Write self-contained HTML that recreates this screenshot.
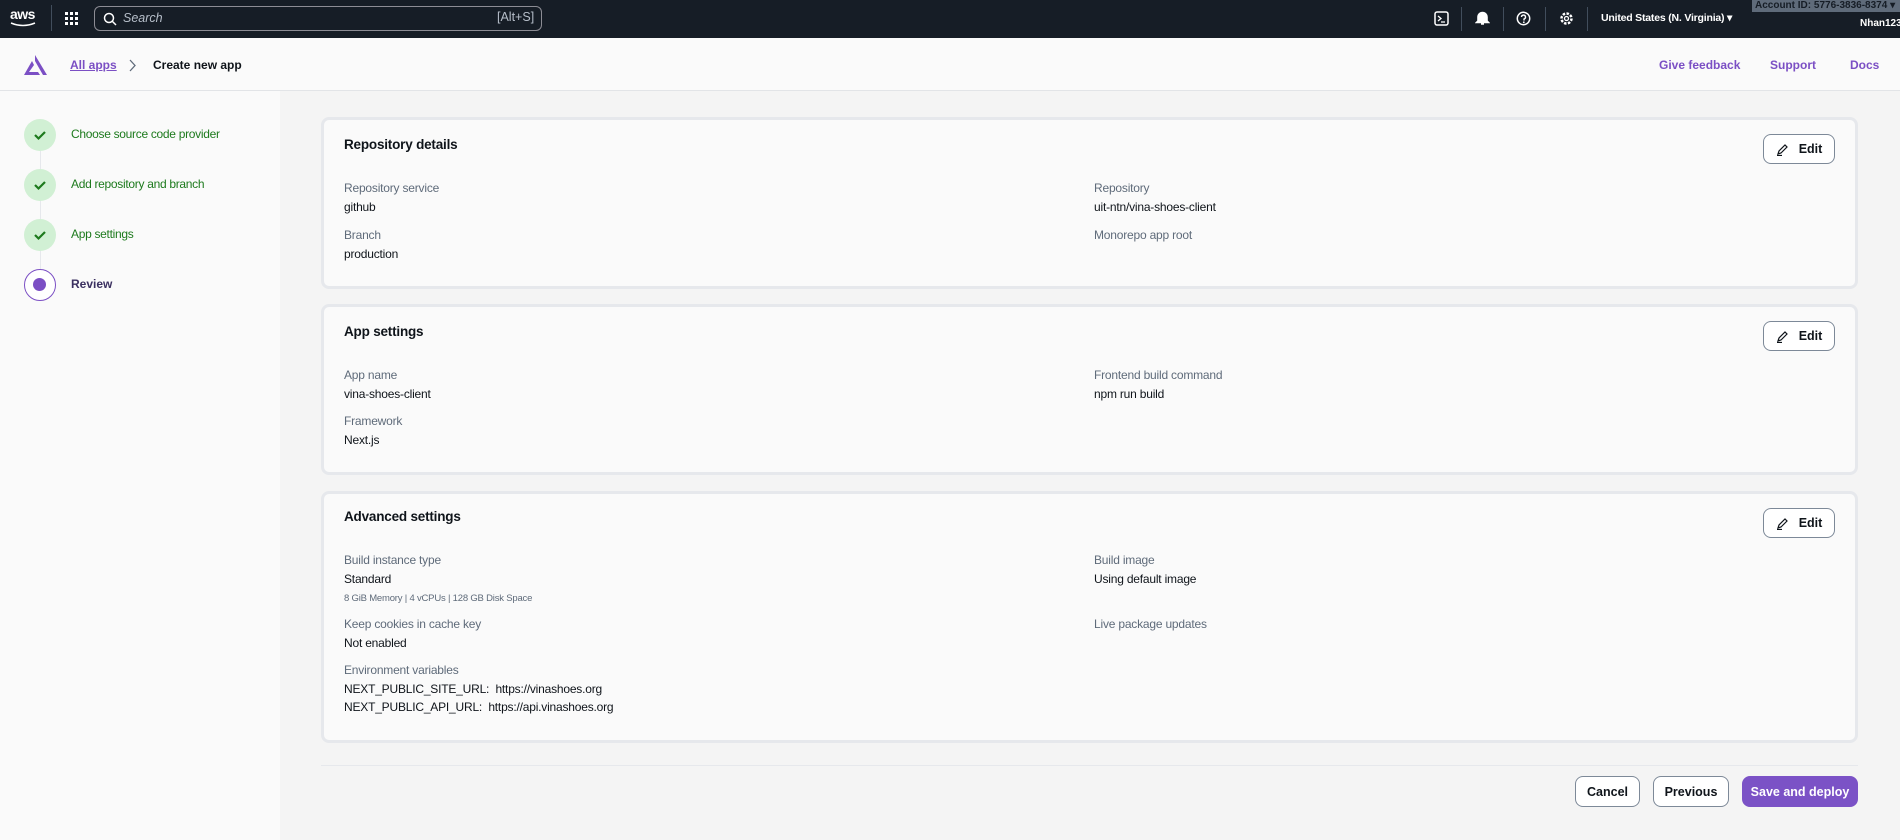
<!DOCTYPE html>
<html><head><meta charset="utf-8"><style>
*{box-sizing:border-box;margin:0;padding:0}
body{width:1900px;height:840px;overflow:hidden;font-family:"Liberation Sans",sans-serif;font-size:12px;color:#0f141a;background:#f4f4f4;position:relative}
.abs{position:absolute}
.top{left:0;top:0;width:1900px;height:38px;background:#161d26}
.hdr{left:0;top:38px;width:1900px;height:53px;background:#fafafa;border-bottom:1px solid #e2e4e7}
.side{left:0;top:91px;width:280px;height:749px;background:#fafafa}
.circ{width:32px;height:32px;border-radius:50%;background:#d1f0d4;left:24px}
.circ svg{position:absolute;left:8px;top:8px}
.step{left:71px;color:#1d7a1d;font-size:12px;letter-spacing:-0.3px}
.card{left:321px;width:1537px;background:#fafafa;border:3px solid #e6e8ec;border-radius:8px}
.ttl{font-weight:bold;font-size:13.5px;left:20px;letter-spacing:-0.2px}
.lb{color:#5f6b7a;font-size:12px;letter-spacing:-0.2px}
.vl{font-size:12px;letter-spacing:-0.2px}
.edit{width:72px;height:30px;border:1px solid #7d8998;border-radius:8px;background:#fff;font-weight:bold;font-size:12.5px;display:flex;align-items:center;justify-content:center;gap:10px}
.btn{height:31px;border:1px solid #7d8998;border-radius:8px;background:#fff;font-weight:bold;font-size:12.5px;display:flex;align-items:center;justify-content:center}
.purp{color:#7b4fc4;font-weight:bold;font-size:12px}
.sep{width:1px;height:24px;background:#414d5c;top:7px}
</style></head><body>
<div class="abs top">
 <div class="abs" style="left:10px;top:6px;color:#fff;font-size:14px;font-weight:bold;letter-spacing:-0.5px">aws</div>
 <svg class="abs" style="left:10px;top:22px" width="28" height="6"><path d="M1 1 Q13 6 25 1" stroke="#fff" stroke-width="1.5" fill="none"/></svg>
 <div class="abs" style="left:51px;top:5px;width:1px;height:26px;background:#414d5c"></div>
 <svg class="abs" style="left:65px;top:12px" width="14" height="14" fill="#fff"><rect x="0" y="0" width="3" height="3"/><rect x="5" y="0" width="3" height="3"/><rect x="10" y="0" width="3" height="3"/><rect x="0" y="5" width="3" height="3"/><rect x="5" y="5" width="3" height="3"/><rect x="10" y="5" width="3" height="3"/><rect x="0" y="10" width="3" height="3"/><rect x="5" y="10" width="3" height="3"/><rect x="10" y="10" width="3" height="3"/></svg>
 <div class="abs" style="left:94px;top:6px;width:448px;height:25px;border:1px solid #8c8c94;border-radius:6px"></div>
 <svg class="abs" style="left:103px;top:12px" width="14" height="14"><circle cx="6" cy="6" r="4.5" stroke="#fff" stroke-width="1.5" fill="none"/><path d="M9.5 9.5L13 13" stroke="#fff" stroke-width="1.5"/></svg>
 <div class="abs" style="left:123px;top:11px;color:#b6bec9;font-style:italic;font-size:12.5px">Search</div>
 <div class="abs" style="left:497px;top:10px;color:#b6bec9;font-size:12.5px">[Alt+S]</div>
 <svg class="abs" style="left:1434px;top:11px" width="15" height="15"><rect x="1" y="1" width="13" height="13" rx="2" stroke="#fff" stroke-width="1.5" fill="none"/><path d="M4 5l3 2.5L4 10M7 11h4" stroke="#fff" stroke-width="1.3" fill="none"/></svg>
 <div class="abs sep" style="left:1461px"></div>
 <svg class="abs" style="left:1475px;top:10px" width="15" height="16"><path d="M3 11V7a4.5 4.5 0 0 1 9 0v4l1.5 1.5h-12z M6 14h3" stroke="#fff" stroke-width="1.6" fill="#fff"/></svg>
 <div class="abs sep" style="left:1503px"></div>
 <svg class="abs" style="left:1516px;top:11px" width="15" height="15"><circle cx="7.5" cy="7.5" r="6.2" stroke="#fff" stroke-width="1.5" fill="none"/><path d="M5.5 6a2 2 0 1 1 2.5 2v1.5" stroke="#fff" stroke-width="1.4" fill="none"/><circle cx="7.8" cy="11.3" r="0.9" fill="#fff"/></svg>
 <div class="abs sep" style="left:1545px"></div>
 <svg class="abs" style="left:1559px;top:11px" width="15" height="15"><circle cx="7.5" cy="7.5" r="5" stroke="#fff" stroke-width="2.5" stroke-dasharray="2.5 1.4" fill="none"/><circle cx="7.5" cy="7.5" r="2" stroke="#fff" stroke-width="1.3" fill="none"/></svg>
 <div class="abs sep" style="left:1587px"></div>
 <div class="abs" style="left:1601px;top:12px;color:#fff;font-size:10.5px;font-weight:bold;letter-spacing:-0.2px">United States (N. Virginia) ▾</div>
 <div class="abs" style="left:1752px;top:0;width:148px;height:12px;background:#5f6b7a;color:#161d26;font-size:10px;font-weight:bold;line-height:12px;padding-left:3px;white-space:nowrap">Account ID: 5776-3836-8374 ▾</div>
 <div class="abs" style="left:1860px;top:18px;color:#fff;font-size:10px;font-weight:bold">Nhan123</div>
</div>
<div class="abs hdr">
 <svg class="abs" style="left:23px;top:17px" width="25" height="21"><path d="M12 0L24 20h-4L12 6z M9 6l2 4-5 7h9l2 3H1z" fill="#7b4fc4"/></svg>
 <div class="abs" style="left:70px;top:20px;color:#7b4fc4;font-weight:bold;text-decoration:underline;font-size:12px">All apps</div>
 <svg class="abs" style="left:129px;top:21px" width="8" height="13"><path d="M1 1l5 5.5L1 12" stroke="#5f6b7a" stroke-width="1.3" fill="none"/></svg>
 <div class="abs" style="left:153px;top:20px;font-weight:bold;font-size:12px">Create new app</div>
 <div class="abs purp" style="left:1659px;top:20px">Give feedback</div>
 <div class="abs purp" style="left:1770px;top:20px">Support</div>
 <div class="abs purp" style="left:1850px;top:20px">Docs</div>
</div>
<div class="abs side"></div>
<div class="abs" style="left:40px;top:151px;width:1px;height:118px;background:#e6e8ec"></div>
<div class="abs circ" style="top:119px"><svg width="16" height="16"><path d="M3 8l3.5 3.5L13 5" stroke="#1d7a1d" stroke-width="2.2" fill="none"/></svg></div>
<div class="abs step" style="top:127px">Choose source code provider</div>
<div class="abs circ" style="top:169px"><svg width="16" height="16"><path d="M3 8l3.5 3.5L13 5" stroke="#1d7a1d" stroke-width="2.2" fill="none"/></svg></div>
<div class="abs step" style="top:177px">Add repository and branch</div>
<div class="abs circ" style="top:219px"><svg width="16" height="16"><path d="M3 8l3.5 3.5L13 5" stroke="#1d7a1d" stroke-width="2.2" fill="none"/></svg></div>
<div class="abs step" style="top:227px">App settings</div>
<div class="abs" style="left:24px;top:269px;width:32px;height:32px;border-radius:50%;border:1.5px solid #7b4fc4;background:#fff"><div class="abs" style="left:8px;top:8px;width:13px;height:13px;border-radius:50%;background:#7b4fc4"></div></div>
<div class="abs" style="left:71px;top:277px;font-weight:bold;color:#3b3060;font-size:12px">Review</div>

<div class="abs card" style="top:117px;height:172px">
 <div class="abs ttl" style="top:17px">Repository details</div>
 <div class="abs edit" style="left:1439px;top:14px"><svg width="13" height="13"><path d="M2 11l1-3 6-6 2 2-6 6z M1 12.5h5" stroke="#0f141a" stroke-width="1.2" fill="none"/></svg>Edit</div>
 <div class="abs lb" style="left:20px;top:61px">Repository service</div>
 <div class="abs vl" style="left:20px;top:80px">github</div>
 <div class="abs lb" style="left:20px;top:108px">Branch</div>
 <div class="abs vl" style="left:20px;top:127px">production</div>
 <div class="abs lb" style="left:770px;top:61px">Repository</div>
 <div class="abs vl" style="left:770px;top:80px">uit-ntn/vina-shoes-client</div>
 <div class="abs lb" style="left:770px;top:108px">Monorepo app root</div>
</div>
<div class="abs card" style="top:304px;height:171px">
 <div class="abs ttl" style="top:17px">App settings</div>
 <div class="abs edit" style="left:1439px;top:14px"><svg width="13" height="13"><path d="M2 11l1-3 6-6 2 2-6 6z M1 12.5h5" stroke="#0f141a" stroke-width="1.2" fill="none"/></svg>Edit</div>
 <div class="abs lb" style="left:20px;top:61px">App name</div>
 <div class="abs vl" style="left:20px;top:80px">vina-shoes-client</div>
 <div class="abs lb" style="left:20px;top:107px">Framework</div>
 <div class="abs vl" style="left:20px;top:126px">Next.js</div>
 <div class="abs lb" style="left:770px;top:61px">Frontend build command</div>
 <div class="abs vl" style="left:770px;top:80px">npm run build</div>
</div>
<div class="abs card" style="top:491px;height:252px">
 <div class="abs ttl" style="top:15px">Advanced settings</div>
 <div class="abs edit" style="left:1439px;top:14px"><svg width="13" height="13"><path d="M2 11l1-3 6-6 2 2-6 6z M1 12.5h5" stroke="#0f141a" stroke-width="1.2" fill="none"/></svg>Edit</div>
 <div class="abs lb" style="left:20px;top:59px">Build instance type</div>
 <div class="abs vl" style="left:20px;top:78px">Standard</div>
 <div class="abs lb" style="left:20px;top:99px;font-size:9.5px">8 GiB Memory | 4 vCPUs | 128 GB Disk Space</div>
 <div class="abs lb" style="left:20px;top:123px">Keep cookies in cache key</div>
 <div class="abs vl" style="left:20px;top:142px">Not enabled</div>
 <div class="abs lb" style="left:20px;top:169px">Environment variables</div>
 <div class="abs vl" style="left:20px;top:188px">NEXT_PUBLIC_SITE_URL:&nbsp; https://vinashoes.org</div>
 <div class="abs vl" style="left:20px;top:206px">NEXT_PUBLIC_API_URL:&nbsp; https://api.vinashoes.org</div>
 <div class="abs lb" style="left:770px;top:59px">Build image</div>
 <div class="abs vl" style="left:770px;top:78px">Using default image</div>
 <div class="abs lb" style="left:770px;top:123px">Live package updates</div>
</div>
<div class="abs" style="left:321px;top:765px;width:1537px;height:1px;background:#e6e8ec"></div>
<div class="abs btn" style="left:1575px;top:776px;width:65px">Cancel</div>
<div class="abs btn" style="left:1653px;top:776px;width:76px">Previous</div>
<div class="abs btn" style="left:1742px;top:776px;width:116px;background:#7b52c6;border-color:#7b52c6;color:#fff">Save and deploy</div>
</body></html>
